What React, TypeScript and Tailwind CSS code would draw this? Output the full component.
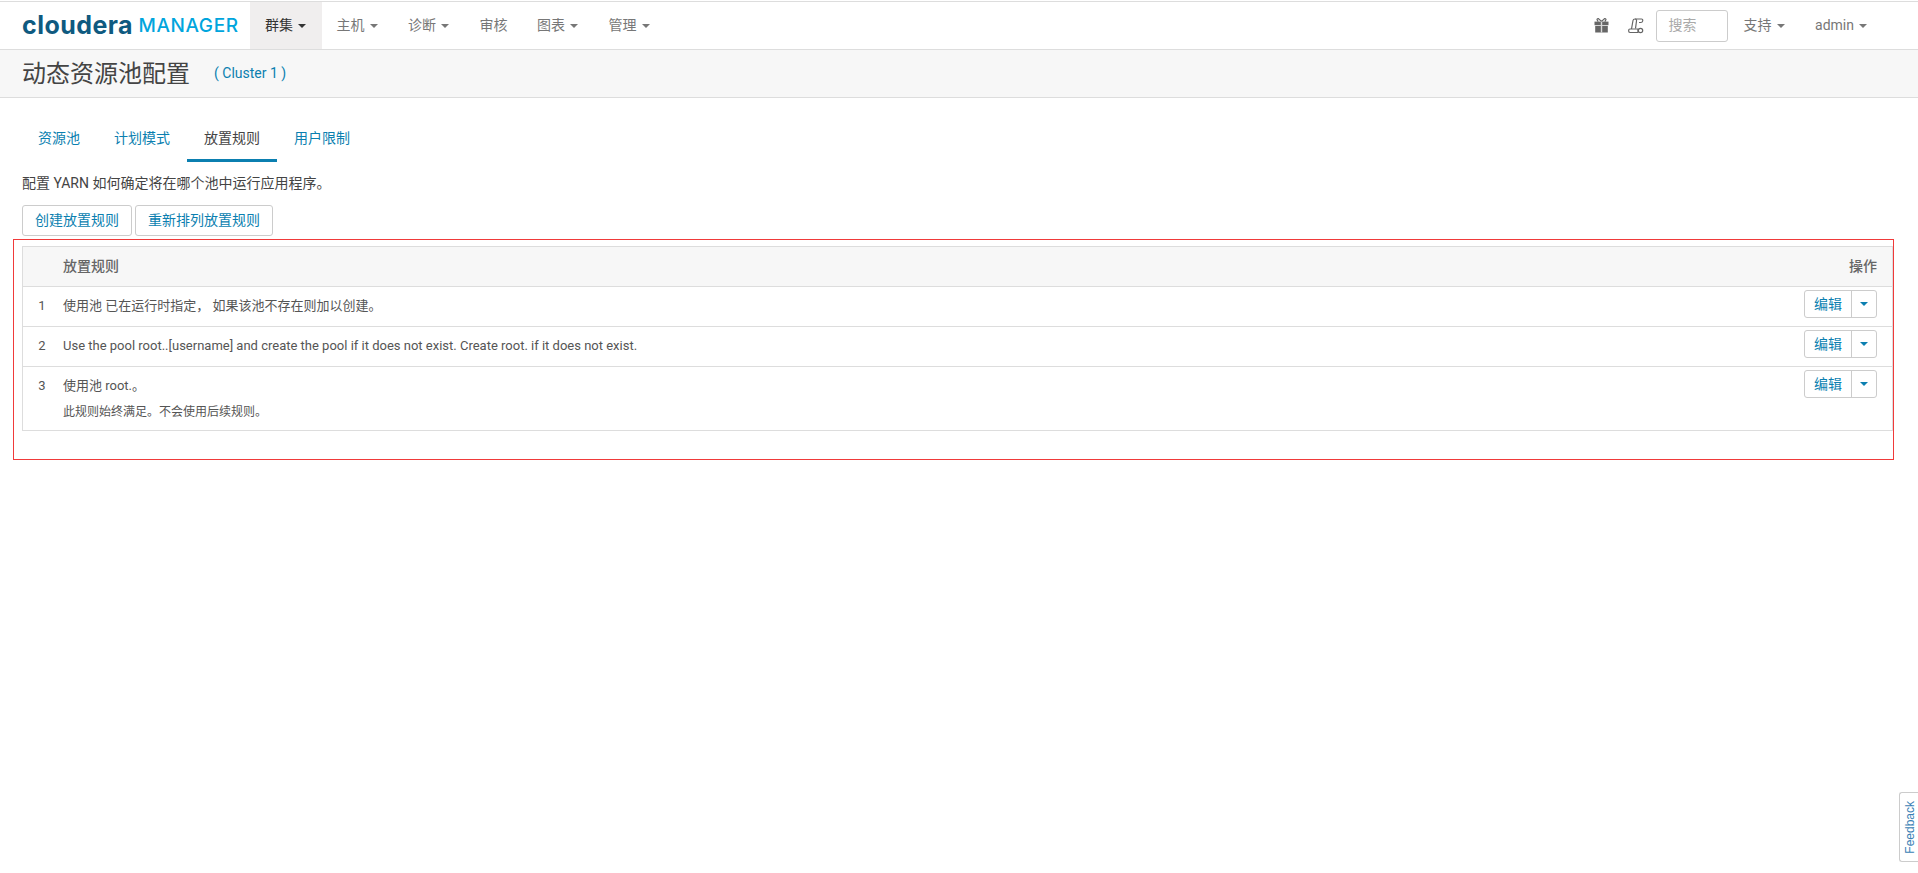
import React from "react";

const Caret = ({ className = "border-t-[#777]" }: { className?: string }) => (
  <span className={`inline-block w-0 h-0 border-x-[4px] border-x-transparent border-t-[4px] ${className}`} />
);

const NavItem = ({ label, active, caret = true }: { label: string; active?: boolean; caret?: boolean }) => (
  <div className={`flex items-center gap-[5px] h-full pl-[15px] ${caret ? "pr-[15.5px]" : "pr-[14.5px]"} text-[14px] ${active ? "bg-[#f0eeee] text-[#333]" : "text-[#777]"}`}>
    <span>{label}</span>
    {caret && <Caret className={active ? "border-t-[#333]" : "border-t-[#777]"} />}
  </div>
);

const GiftIcon = () => (
  <svg width="15" height="15" viewBox="0 0 15 15" className="mr-[19px]">
    <path d="M4.2 3.6 L3 1.6 Q3.2 0.4 4.6 0.7 L7.5 3.4 L10.4 0.7 Q11.8 0.4 12 1.6 L10.8 3.6" fill="none" stroke="#666" strokeWidth="1.2" />
    <rect x="0.5" y="3.6" width="14" height="3.6" fill="#666" />
    <rect x="1.2" y="7.9" width="12.6" height="6.6" fill="#666" />
    <rect x="6.8" y="3.6" width="1.4" height="10.9" fill="#d9d9d9" />
  </svg>
);

const ScrollIcon = () => (
  <svg width="16" height="16" viewBox="0 0 16 16" fill="none" stroke="#666" strokeWidth="1.2">
    <path d="M3.5 11 L5 2.5 Q5.3 1 7 1 H13.5 Q15 1 14.7 3 Q14.4 4.5 12.8 4.5 H11" />
    <path d="M7 1 Q8.8 1 8.5 3 L7.5 10.5" />
    <path d="M2 11 H10 V14.5 H2 Q0.6 14.5 0.6 12.8 Q0.6 11 2 11 Z" />
    <circle cx="12.5" cy="12.5" r="2.2" />
  </svg>
);

const SplitButton = () => (
  <div className="flex h-[28px] w-[73px] rounded-[3px] border border-[#ccc] bg-white text-[14px] text-[#0b7fb0]">
    <div className="flex w-[47px] items-center justify-center border-r border-[#ccc]">编辑</div>
    <div className="flex flex-1 items-center justify-center"><Caret className="border-t-[#0b7fb0]" /></div>
  </div>
);

const Row = ({ n, children, h }: { n: number; children: React.ReactNode; h: string }) => (
  <div className={`flex border-b border-[#ddd] ${h}`}>
    <div className="w-[40px] pt-[9px] pr-[2px] text-center text-[13px] leading-[20px] text-[#555]">{n}</div>
    <div className="flex-1 pt-[9px] text-[13px] leading-[20px] text-[#555]">{children}</div>
    <div className="pt-[3px] pr-[15px]"><SplitButton /></div>
  </div>
);

export default function App() {
  return (
    <div className="relative h-[873px] overflow-hidden bg-white text-[#444]" style={{ fontFamily: 'Roboto, "Noto Sans CJK SC", sans-serif' }}>
      <header className="mt-px flex h-[49px] items-stretch border-y border-[#ddd] bg-white">
        <div className="flex w-[250px] items-center pl-[22px] whitespace-nowrap" style={{ fontFamily: 'Inter, sans-serif' }}>
          <span className="text-[25px] font-bold leading-none tracking-[0.45px] text-[#0f5a80]">cloudera</span>
          <span className="ml-[5.5px] text-[19px] font-medium leading-none tracking-[0.6px] text-[#00a5dd]">MANAGER</span>
        </div>
        <NavItem label="群集" active />
        <NavItem label="主机" />
        <NavItem label="诊断" />
        <NavItem label="审核" caret={false} />
        <NavItem label="图表" />
        <NavItem label="管理" />
        <div className="ml-auto flex items-center pr-[35.5px]">
          <GiftIcon />
          <ScrollIcon />
          <div className="ml-[12px] mr-[1px] flex h-[32px] w-[72px] items-center rounded-[3px] border border-[#ccc] pl-[12px] text-[14px] text-[#aaa]">搜索</div>
          <NavItem label="支持" />
          <NavItem label="admin" />
        </div>
      </header>

      <div className="flex h-[48px] items-center border-b border-[#ddd] bg-[#f7f7f7] pl-[22px]">
        <h1 className="text-[24px] font-normal text-[#444]">动态资源池配置</h1>
        <span className="ml-[24px] text-[14px] text-[#0b7fb0]">( Cluster 1 )</span>
      </div>

      <main className="px-[22px]">
        <nav className="mt-[21px] ml-[-1px] flex h-[43px] text-[14px]">
          <div className="px-[17px] pt-[9px] text-[#0b7fb0]">资源池</div>
          <div className="px-[17px] pt-[9px] text-[#0b7fb0]">计划模式</div>
          <div className="border-b-[3px] border-[#0b7fb0] px-[17px] pt-[9px] text-[#444]">放置规则</div>
          <div className="px-[17px] pt-[9px] text-[#0b7fb0]">用户限制</div>
        </nav>
        <p className="mt-[11px] text-[14px] leading-[20px] text-[#444]">配置 YARN 如何确定将在哪个池中运行应用程序。</p>
        <div className="mt-[12px] flex gap-[3px] text-[14px] text-[#0b7fb0]">
          <div className="flex h-[31px] items-center rounded-[3px] border border-[#ccc] px-[12px]">创建放置规则</div>
          <div className="flex h-[31px] items-center rounded-[3px] border border-[#ccc] px-[12px]">重新排列放置规则</div>
        </div>
        <section className="mt-[10px] mr-[3px] border-x border-t border-[#ddd]">
          <div className="flex h-[40px] items-center justify-between border-b border-[#ddd] bg-[#f7f7f7] pl-[40px] pr-[15px] text-[14px] font-medium text-[#666]">
            <span>放置规则</span>
            <span>操作</span>
          </div>
          <Row n={1} h="h-[40px]">使用池 已在运行时指定， 如果该池不存在则加以创建。</Row>
          <Row n={2} h="h-[40px]">Use the pool root..[username] and create the pool if it does not exist. Create root. if it does not exist.</Row>
          <Row n={3} h="h-[64px]">
            <div>使用池 root.。</div>
            <div className="mt-[7px] text-[12px] leading-[18px]">此规则始终满足。不会使用后续规则。</div>
          </Row>
        </section>
      </main>

      <div className="pointer-events-none absolute left-[13px] top-[239px] h-[221px] w-[1881px] border border-[#f03a3a]" />

      <div className="absolute right-0 top-[792px] flex h-[70px] w-[19px] items-center justify-center rounded-l-[3px] border border-r-0 border-[#ccc] bg-white pl-[2px]">
        <span className="rotate-180 text-[12px] text-[#3a7fb5] [writing-mode:vertical-rl]" style={{ fontFamily: '"Liberation Sans", sans-serif' }}>Feedback</span>
      </div>
    </div>
  );
}
